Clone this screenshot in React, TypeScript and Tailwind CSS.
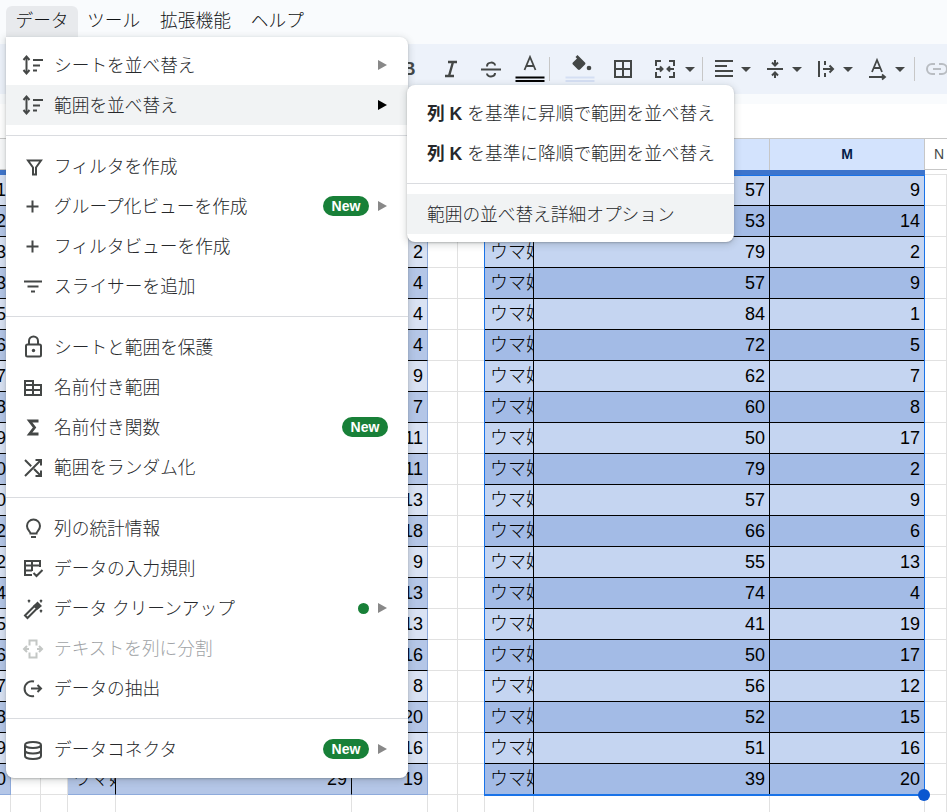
import React from "react";

const WIDTHS = ["w-[11px]", "w-[30px]", "w-[27px]", "w-[48px]", "w-[236px]", "w-[76px]", "w-[30px]", "w-[27px]", "w-[49px]", "w-[236px]", "w-[155px]", "w-[22px]"];

const first = ["1", "2", "3", "3", "5", "6", "7", "8", "9", "0", "0", "2", "2", "4", "5", "6", "7", "8", "9", "0"];
const leftVals = ["", "", "2", "4", "4", "4", "9", "7", "11", "11", "13", "18", "9", "13", "13", "16", "8", "20", "16", "19"];
const colL = [57, 53, 79, 57, 84, 72, 62, 60, 50, 79, 57, 66, 55, 74, 41, 50, 56, 52, 51, 39];
const colM = [9, 14, 2, 9, 1, 5, 7, 8, 17, 2, 9, 6, 13, 4, 19, 17, 12, 15, 16, 20];

function Cell({ w, tone, kind, align, children }: { w: string; tone: string; kind: string; align?: string; children?: React.ReactNode }) {
  return (
    <div className={`${w} ${tone} ${kind} ${align === "left" ? "justify-start pl-[5px] font-light" : "justify-end pr-[4px]"} flex h-full shrink-0 items-center overflow-hidden whitespace-nowrap border-r border-b`}>
      {children}
    </div>
  );
}

function DataRow({ i }: { i: number }) {
  const even = i % 2 === 1;
  const last = i === 19;
  const leftTone = even ? "bg-[#b4c6e7]" : "bg-[#d9e2f3]";
  const rightTone = even ? "bg-[#a3bbe6]" : "bg-[#c5d5f1]";
  const lineKind = last ? "border-b-[#8eaadb] border-r-black" : "border-black";
  const empty = "border-[#e1e1e1] bg-white";
  return (
    <div className="flex h-[31px]">
      <Cell w={WIDTHS[0]} tone={leftTone} kind={last ? "border-b-[#8eaadb] border-r-[#8eaadb]" : "border-b-black border-r-[#8eaadb]"}>{first[i]}</Cell>
      <Cell w={WIDTHS[1]} tone="" kind={empty} />
      <Cell w={WIDTHS[2]} tone="" kind={empty} />
      <Cell w={WIDTHS[3]} tone={leftTone} kind={lineKind} align="left">ウマ娘</Cell>
      <Cell w={WIDTHS[4]} tone={leftTone} kind={lineKind}>{last ? "29" : ""}</Cell>
      <Cell w={WIDTHS[5]} tone={leftTone} kind={last ? "border-[#8eaadb]" : "border-b-black border-r-[#8eaadb]"}>{leftVals[i]}</Cell>
      <Cell w={WIDTHS[6]} tone="" kind={empty} />
      <Cell w={WIDTHS[7]} tone="" kind={empty} />
      <Cell w={WIDTHS[8]} tone={rightTone} kind={lineKind} align="left">ウマ娘</Cell>
      <Cell w={WIDTHS[9]} tone={rightTone} kind={lineKind}>{colL[i]}</Cell>
      <Cell w={WIDTHS[10]} tone={rightTone} kind={lineKind}>{colM[i]}</Cell>
      <Cell w={WIDTHS[11]} tone="" kind={empty} />
    </div>
  );
}

function Ic({ children, color = "#444746", sw = 2 }: { children: React.ReactNode; color?: string; sw?: number }) {
  return (
    <svg width="24" height="24" viewBox="0 0 24 24" fill="none" stroke={color} strokeWidth={sw} className="shrink-0 overflow-visible">
      {children}
    </svg>
  );
}

const SortIcon = () => (
  <Ic>
    <path d="M6.5 5v14" />
    <path d="M3.5 7l3-3.5 3 3.5M3.5 17l3 3.5 3-3.5" />
    <path d="M13 7h10M13 12.5h7M13 17.5h4" />
  </Ic>
);
const FilterIcon = () => <Ic><path d="M8 6.500h13l-5 7v7h-3v-7z" /></Ic>;
const PlusIcon = () => <Ic><path d="M12.5 6.5v12M6.5 12.5h12" /></Ic>;
const SlicerIcon = () => <Ic><path d="M4 7.5h18M7.5 12.5h11M11 17.5h4" /></Ic>;
const LockIcon = () => (
  <Ic>
    <rect x="6" y="9.5" width="15" height="12" rx="1.5" />
    <path d="M9 9.5V6a4.5 4.5 0 0 1 9 0v3.5" />
    <circle cx="13.5" cy="15.5" r="1.7" fill="#444746" stroke="none" />
  </Ic>
);
const NamedIcon = () => <Ic><path d="M5 6h8v4h8v10H5zM5 15h16M13 10v10M5 10h8" /></Ic>;
const SigmaIcon = () => <Ic sw={2.8}><path d="M18.500 6H9.500l5 6.500-5 6.500h9" /></Ic>;
const ShuffleIcon = () => <Ic><path d="M15.5 5H21v5.5M21 5 5 21M5 5l6.200 6.200M14 14l7 7M21 15.500V21h-5.500" /></Ic>;
const BulbIcon = () => <Ic><path d="M10.5 17.5c0-2.200-3.500-3-3.500-7.500a6.500 6.500 0 0 1 13 0c0 4.500-3.500 5.300-3.500 7.500zM11 21h5" /></Ic>;
const ValidIcon = () => <Ic><path d="M20 11V5H5v14h7M5 9.5h15M12 5v10M5 14.5h7M13.500 17l3 3 6-6" /></Ic>;
const WandIcon = () => (
  <Ic>
    <path d="M5 19.500 14.500 10l2.500 2.500L7.500 22z" />
    <path d="M14.500 10l3-3 3 3-3 2.500z" fill="#444746" />
    <path d="M8 4l2 2M10 4 8 6M20 4l2 2M22 4l-2 2M20 14l2 2M22 14l-2 2" strokeWidth="1.500" />
  </Ic>
);
const SplitIcon = () => <Ic color="#c4c7c5"><path d="M9.500 9.500V4.500h7v5M9.500 16.500v5h7v-5M4 13h5M7 10l-3 3 3 3M22 13h-5M19 10l3 3-3 3" /></Ic>;
const ExtractIcon = () => <Ic><path d="M14 5.500A7.500 7.500 0 1 0 14 20M11 12.500h10M17.500 9 21 12.500 17.500 16" /></Ic>;
const DbIcon = () => (
  <Ic>
    <ellipse cx="13" cy="8" rx="8" ry="3" />
    <path d="M5 8v11c0 1.700 3.600 3 8 3s8-1.300 8-3V8M5 13.500c0 1.700 3.600 3 8 3s8-1.300 8-3" />
  </Ic>
);

function Arrow({ dark }: { dark?: boolean }) {
  return (
    <svg width="9" height="10" viewBox="0 0 9 10" className="shrink-0">
      <path d="M0 0l9 5-9 5z" fill={dark ? "#000" : "#888"} />
    </svg>
  );
}

function Badge() {
  return <span className="flex h-5 w-[46px] items-center justify-center rounded-full bg-[#188038] text-[14px] font-bold text-white">New</span>;
}

function Item({ icon, label, right, hover, disabled }: { icon: React.ReactNode; label: string; right?: React.ReactNode; hover?: boolean; disabled?: boolean }) {
  return (
    <div className={`flex h-10 items-center pl-[14px] pr-5 ${hover ? "bg-[#f1f3f4]" : ""}`}>
      {icon}
      <span className={`ml-[10px] flex-1 whitespace-nowrap pt-[3px] font-light ${disabled ? "text-[#a0a3a6]" : "text-[#26282b]"}`}>{label}</span>
      {right}
    </div>
  );
}

const Sep = () => <div className="my-[10px] h-px bg-[#dadce0]" />;

const WithArrow = ({ badge, dot, dark }: { badge?: boolean; dot?: boolean; dark?: boolean }) => (
  <div className="flex items-center gap-[9px] pr-px">
    {badge && <Badge />}
    {dot && <span className="h-[11px] w-[11px] rounded-full bg-[#188038]" />}
    <Arrow dark={dark} />
  </div>
);

const Caret = () => (
  <svg width="10" height="5" viewBox="0 0 10 5" className="shrink-0"><path d="M0 0h10L5 5z" fill="#444746" /></svg>
);

function Slot({ w, children }: { w: string; children?: React.ReactNode }) {
  return <div className={`${w} flex shrink-0 items-center justify-center`}>{children}</div>;
}
const Divider = ({ ml = "" }: { ml?: string }) => <div className={`h-6 w-px shrink-0 bg-[#c7c7c7] ${ml}`} />;

function SubItem({ bold, rest, hover }: { bold?: string; rest: string; hover?: boolean }) {
  return (
    <div className={`flex h-10 items-center whitespace-pre px-5 pt-[2px] text-[#26282b] ${hover ? "bg-[#f1f3f4]" : ""}`}>
      {bold && <span className="font-bold">{bold}</span>}
      <span className="font-light">{rest}</span>
    </div>
  );
}

export default function App() {
  return (
    <div className="relative h-[812px] w-[947px] overflow-hidden bg-white font-['Liberation_Sans','Noto_Sans_CJK_JP',sans-serif] text-[18px] text-black">
      {/* Menu bar */}
      <div className="flex h-[44px] items-start bg-[#f9fbfd] pl-[6px] pt-[6px] text-[17.7px] font-light text-[#111315]">
        <div className="flex h-[31px] w-[72px] items-center justify-center rounded-t-md bg-[#e8eaed]">データ</div>
        <div className="ml-[9px] flex h-[31px] items-center">ツール</div>
        <div className="ml-[20px] flex h-[31px] items-center">拡張機能</div>
        <div className="ml-[20px] flex h-[31px] items-center">ヘルプ</div>
      </div>

      {/* Toolbar */}
      <div className="flex h-[50px] items-center bg-[#edf2fa]">
        <div className="w-[388px] shrink-0" />
        <Slot w="w-[42px]"><span className="text-[18px] font-bold text-[#444746]">B</span></Slot>
        <Slot w="w-[42px]">
          <Ic sw={2.4}><path d="M9 5h9M6 19h9M14 5l-4 14" /></Ic>
        </Slot>
        <Slot w="w-[38px]">
          <Ic><path d="M2 12.500h20M8 9.500c0-5 8-5 8-1M16 16c0 4.500-8 4.500-8 .5" /></Ic>
        </Slot>
        <Slot w="w-[39px]">
          <svg width="30" height="28" viewBox="0 0 30 28" fill="none" className="shrink-0">
            <path d="M9.500 15 15 2l5.500 13M11 11h8" stroke="#444746" strokeWidth="1.800" />
            <path d="M0.500 22.500h29M0.500 26h29" stroke="#000" strokeWidth="2" />
          </svg>
        </Slot>
        <Divider />
        <Slot w="w-[60px]">
          <svg width="30" height="28" viewBox="0 0 30 28" className="shrink-0">
            <path d="M12.500 0l7.500 7.500c.6.6.6 1.500 0 2.100l-5 5c-.6.6-1.500.6-2.100 0l-5-5c-.6-.6-.6-1.500 0-2.100L12 3.500 10.500 2z" fill="#444746" />
            <circle cx="24" cy="13" r="2.300" fill="#444746" />
            <path d="M0.500 22.500h29M0.500 26h29" stroke="#d5dff3" strokeWidth="2" />
          </svg>
        </Slot>
        <Slot w="w-[26px]">
          <Ic><path d="M4 4h16v16H4zM12 4v16M4 12h16" /></Ic>
        </Slot>
        <Slot w="ml-[16px] w-[26px]">
          <Ic><path d="M8 4H3v5M16 4h5v5M8 20H3v-5M16 20h5v-5M3 12h6M7 9.500 9.500 12 7 14.500M21 12h-6M17 9.500 14.500 12l2.500 2.500" /></Ic>
        </Slot>
        <Slot w="w-[24px]"><Caret /></Slot>
        <Divider />
        <Slot w="ml-[9px] w-[24px]">
          <Ic><path d="M3 4h18M3 9h12M3 14h18M3 19h18" /></Ic>
        </Slot>
        <Slot w="w-[20px]"><Caret /></Slot>
        <Slot w="ml-[7px] w-[24px]">
          <Ic><path d="M4 12h16M12 3v5M9 5.500 12 8.500l3-3M12 21v-5M9 18.500l3-3 3 3" /></Ic>
        </Slot>
        <Slot w="w-[20px]"><Caret /></Slot>
        <Slot w="ml-[7px] w-[24px]">
          <Ic><path d="M5 4v16M11 4v4M11 11v2M11 16v4M9 12h10M15.500 8.500 19 12l-3.500 3.500" /></Ic>
        </Slot>
        <Slot w="w-[20px]"><Caret /></Slot>
        <Slot w="ml-[7px] w-[24px]">
          <Ic sw={1.800}><path d="M7 15 12 3l5 12M8.500 11h7M4 20h15M17 17.500l3 2.500-3 2.500" /></Ic>
        </Slot>
        <Slot w="ml-px w-[20px]"><Caret /></Slot>
        <Divider ml="ml-[4px]" />
        <Slot w="ml-[10px] w-[24px]">
          <Ic color="#b9bdc2"><path d="M10 7H7a5 5 0 0 0 0 10h3M14 7h3a5 5 0 0 1 0 10h-3M8 12h8" /></Ic>
        </Slot>
      </div>

      <div className="h-[10px] bg-[#f9fbfd]" />
      {/* Formula bar */}
      <div className="h-[35px] border-b border-[#c7c7c7] bg-white" />

      {/* Column header */}
      <div className="flex h-[31px] text-[14px]">
        <div className="h-full w-[534px] shrink-0 border-r border-b border-[#c7c7c7] bg-[#f8f9fa]" />
        <div className="h-full w-[236px] shrink-0 border-r border-[#c7c7c7] bg-[#d3e3fd]" />
        <div className="flex h-full w-[155px] shrink-0 items-center justify-center border-r border-[#c7c7c7] bg-[#d3e3fd] font-bold text-[#041e49]">M</div>
        <div className="flex h-full flex-1 items-center justify-start border-b border-[#c7c7c7] pl-[9px] text-[#444746]">N</div>
      </div>
      <div className="flex h-[5px]">
        <div className="h-full w-[925px] shrink-0 bg-[#3d74cc]" />
        <div className="h-full flex-1 border-b border-[#e1e1e1]" />
      </div>

      {/* Grid */}
      <div className="relative">
        {Array.from({ length: 20 }, (_, i) => <DataRow key={i} i={i} />)}
        <div className="flex h-[17px]">
          {WIDTHS.map((w, i) => <div key={i} className={`${w} h-full shrink-0 border-r border-[#e1e1e1]`} />)}
        </div>
        {/* Selection */}
        <div className="absolute left-[484px] top-0 h-[621px] w-[441px] border border-b-2 border-[#1a73e8]" />
        <div className="absolute left-[918px] top-[614px] h-3 w-3 rounded-full bg-[#0b57d0]" />
      </div>

      {/* Data menu */}
      <div className="absolute left-[6px] top-[37px] w-[402px] rounded-b-lg rounded-tr-lg bg-white pb-[9px] pt-2 text-[17.7px] shadow-[0_2px_6px_2px_rgba(60,64,67,0.15),0_1px_2px_rgba(60,64,67,0.3)]">
        <Item icon={<SortIcon />} label="シートを並べ替え" right={<WithArrow />} />
        <Item icon={<SortIcon />} label="範囲を並べ替え" right={<WithArrow dark />} hover />
        <Sep />
        <Item icon={<FilterIcon />} label="フィルタを作成" />
        <Item icon={<PlusIcon />} label="グループ化ビューを作成" right={<WithArrow badge />} />
        <Item icon={<PlusIcon />} label="フィルタビューを作成" />
        <Item icon={<SlicerIcon />} label="スライサーを追加" />
        <Sep />
        <Item icon={<LockIcon />} label="シートと範囲を保護" />
        <Item icon={<NamedIcon />} label="名前付き範囲" />
        <Item icon={<SigmaIcon />} label="名前付き関数" right={<Badge />} />
        <Item icon={<ShuffleIcon />} label="範囲をランダム化" />
        <Sep />
        <Item icon={<BulbIcon />} label="列の統計情報" />
        <Item icon={<ValidIcon />} label="データの入力規則" />
        <Item icon={<WandIcon />} label="データ クリーンアップ" right={<WithArrow dot />} />
        <Item icon={<SplitIcon />} label="テキストを列に分割" disabled />
        <Item icon={<ExtractIcon />} label="データの抽出" />
        <Sep />
        <Item icon={<DbIcon />} label="データコネクタ" right={<WithArrow badge />} />
      </div>

      {/* Sort submenu */}
      <div className="absolute left-[407px] top-[85px] w-[327px] rounded-lg bg-white pb-2 pt-2 text-[17.7px] shadow-[0_2px_6px_2px_rgba(60,64,67,0.15),0_1px_2px_rgba(60,64,67,0.3)]">
        <SubItem bold="列 K" rest=" を基準に昇順で範囲を並べ替え" />
        <SubItem bold="列 K" rest=" を基準に降順で範囲を並べ替え" />
        <Sep />
        <SubItem rest="範囲の並べ替え詳細オプション" hover />
      </div>
    </div>
  );
}
